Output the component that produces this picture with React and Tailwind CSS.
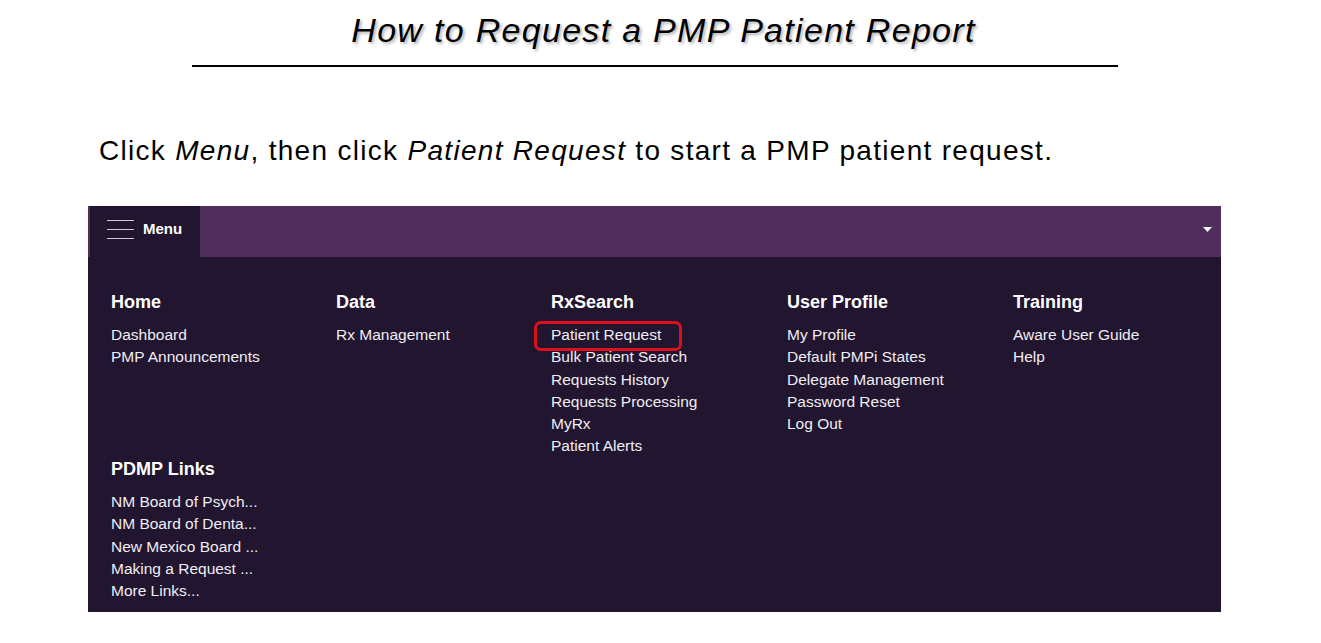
const COLUMNS = [
  { title: "Home", links: ["Dashboard", "PMP Announcements"] },
  { title: "Data", links: ["Rx Management"] },
  {
    title: "RxSearch",
    links: [
      "Patient Request",
      "Bulk Patient Search",
      "Requests History",
      "Requests Processing",
      "MyRx",
      "Patient Alerts",
    ],
  },
  {
    title: "User Profile",
    links: [
      "My Profile",
      "Default PMPi States",
      "Delegate Management",
      "Password Reset",
      "Log Out",
    ],
  },
  { title: "Training", links: ["Aware User Guide", "Help"] },
];

const PDMP_LINKS = [
  "NM Board of Psych...",
  "NM Board of Denta...",
  "New Mexico Board ...",
  "Making a Request ...",
  "More Links...",
];

export default function App() {
  return (
    <div className="h-[643px] w-[1321px] overflow-hidden bg-white">
      <div className="ml-[192px] flex w-[926px] flex-col items-center pt-[10px]">
        <h1 className="ml-[17px] font-['Liberation_Sans',sans-serif] text-[34px] italic leading-[40px] tracking-[1.3px] text-black [text-shadow:2px_2px_3px_#b4b4b4]">
          How to Request a PMP Patient Report
        </h1>
        <div className="mt-[15px] h-[2px] w-full bg-black" />
      </div>

      <p className="ml-[99px] mt-[67px] font-['Liberation_Sans',sans-serif] text-[28px] leading-[34px] tracking-[1.3px] text-black">
        Click <em>Menu</em>, then click <em>Patient Request</em> to start a PMP
        patient request.
      </p>

      <div className="ml-[88px] mt-[38px] w-[1133px] font-['Liberation_Sans',Arial,sans-serif] text-white">
        <TopBar />
        <MegaMenu />
      </div>
    </div>
  );
}

function TopBar() {
  return (
    <div className="flex h-[51px] items-stretch bg-[#4f2e5e]">
      <button className="ml-[2px] flex w-[110px] items-center gap-[9px] bg-[#221530] pb-[5px] pl-[17px]">
        <span className="flex flex-col gap-[8px]">
          <span className="block h-[1px] w-[27px] bg-[#cfc8d6]" />
          <span className="block h-[1px] w-[27px] bg-[#cfc8d6]" />
          <span className="block h-[1px] w-[27px] bg-[#cfc8d6]" />
        </span>
        <span className="text-[15px] font-bold">Menu</span>
      </button>
      <div className="flex flex-1 items-center justify-end pb-[5px] pr-[9px]">
        <svg width="9" height="5" viewBox="0 0 9 5">
          <path d="M0 0 L9 0 L4.5 5 Z" fill="#ffffff" />
        </svg>
      </div>
    </div>
  );
}

function MegaMenu() {
  return (
    <div className="grid h-[355px] grid-cols-[225px_215px_236px_226px_1fr] bg-[#21152f] pl-[23px] pt-[34px]">
      {COLUMNS.map((col) => (
        <MenuColumn key={col.title} title={col.title} links={col.links} />
      ))}
      <MenuColumn title="PDMP Links" links={PDMP_LINKS} className="-mt-[9px]" />
    </div>
  );
}

function MenuColumn({ title, links, className = "" }) {
  return (
    <div className={className}>
      <h2 className="mb-[11px] text-[18px] font-bold leading-[22px]">{title}</h2>
      <ul className="text-[15.5px] leading-[22.3px] text-[#f0edf3]">
        {links.map((link) =>
          link === "Patient Request" ? (
            <li key={link} className="relative">
              <span className="absolute left-[-17px] top-[-3px] h-[30px] w-[148px] rounded-[7px] border-[3px] border-[#e0101b]" />
              {link}
            </li>
          ) : (
            <li key={link}>{link}</li>
          )
        )}
      </ul>
    </div>
  );
}
